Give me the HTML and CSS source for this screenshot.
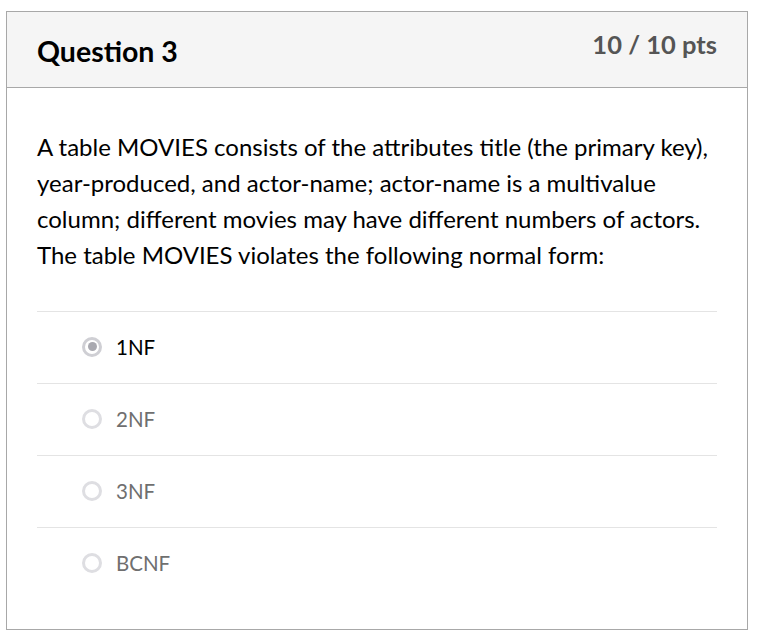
FILE: index.html
```html
<!DOCTYPE html>
<html>
<head>
<meta charset="utf-8">
<link rel="stylesheet" href="styles.css">
</head>
<body>
<div class="card">
  <div class="header">
    <h2 class="title">Question 3</h2>
    <div class="pts">10 / 10 pts</div>
  </div>
  <div class="body">
    <p class="text">A table MOVIES consists of the attributes title (the primary key), year-produced, and actor-name; actor-name is a multivalue column; different movies may have different numbers of actors. The table MOVIES violates the following normal form:</p>
    <div class="answers">
      <div class="answer selected"><span class="radio"></span><span class="label">1NF</span></div>
      <div class="answer"><span class="radio"></span><span class="label">2NF</span></div>
      <div class="answer"><span class="radio"></span><span class="label">3NF</span></div>
      <div class="answer"><span class="radio"></span><span class="label">BCNF</span></div>
    </div>
  </div>
</div>
</body>
</html>
```
FILE: styles.css
```css
html, body { margin: 0; padding: 0; background: #fff; }
body { padding: 11px 10px 0 6px; font-family: Lato, "Open Sans", sans-serif; }
.card {
  border: 1px solid #a8a8a8;
  height: 617px;
  box-sizing: content-box;
}
.header {
  height: 75px;
  background: #f5f5f5;
  border-bottom: 1px solid #a8a8a8;
  display: flex;
  align-items: center;
  justify-content: space-between;
  padding: 0 30px;
}
.title {
  margin: 0;
  font-size: 28.5px;
  font-weight: 700;
  color: #000;
  padding-top: 2px;
}
.pts {
  font-size: 25.5px;
  font-weight: 700;
  color: #555;
  padding-bottom: 11px;
}
.body { padding: 41px 30px 0 30px; }
.text {
  margin: 0;
  font-size: 24px;
  line-height: 36px;
  color: #000;
}
.answers { margin-top: 38px; }
.answer {
  border-top: 1px solid #e4e4e4;
  height: 71px;
  display: flex;
  align-items: center;
  padding-left: 45px;
  padding-bottom: 2px;
  box-sizing: border-box;
  height: 72px;
}
.radio {
  width: 14px;
  height: 14px;
  border: 3px solid #dedee2;
  border-radius: 50%;
  display: inline-flex;
  align-items: center;
  justify-content: center;
  margin-right: 14px;
  box-sizing: content-box;
}
.selected .radio { border-color: #cfcfd4; }
.selected .radio::after {
  content: "";
  width: 9px;
  height: 9px;
  border-radius: 50%;
  background: #a9a9b0;
}
.label { font-size: 20.5px; color: #6f6f6f; }
.selected .label { color: #000; }
```
